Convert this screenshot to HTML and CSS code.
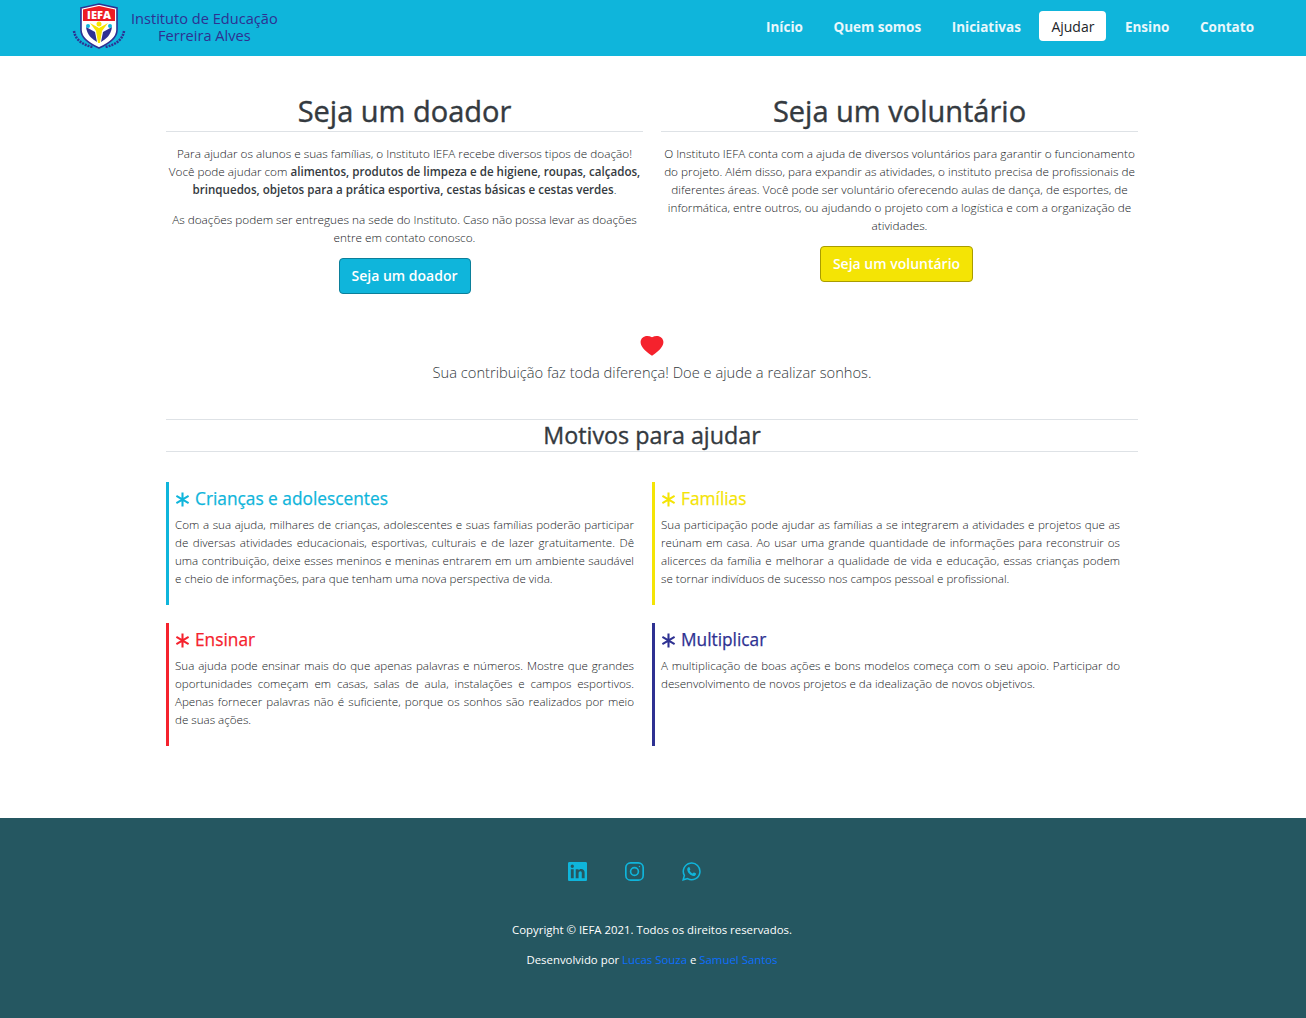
FILE: index.html
```html
<!DOCTYPE html>
<html lang="pt-BR">
<head>
  <meta charset="UTF-8">
  <meta name="viewport" content="width=device-width, initial-scale=1.0">
  <title>Ajudar - IEFA</title>
  <link rel="stylesheet" href="styles.css">
</head>
<body>
  <header class="navbar">
    <a class="brand" href="#">
      <svg class="logo" width="56" height="48" viewBox="0 0 56 48">
        <g fill="none" stroke="#2e3192" stroke-width="2.500" stroke-dasharray="2 1">
          <path d="M3 28c1 8 8 14 19 16"/>
          <path d="M53 28c-1 8-8 14-19 16"/>
        </g>
        <path d="M10 5 28 1l18 4v22c0 8-9 14-18 18-9-4-18-10-18-18z" fill="#fff" stroke="#2e3192" stroke-width="1.600"/>
        <path d="M12 6.500 28 3l16 3.500V18H12z" fill="#ed1c24"/>
        <text class="logo-text" x="28" y="16" text-anchor="middle">IEFA</text>
        <path d="M15 24c1 8 6 12 11 15l-2-10z" fill="#2e3192"/>
        <path d="M41 24c-1 8-6 12-11 15l2-10z" fill="#2e3192"/>
        <circle cx="17" cy="23" r="2" fill="#0fb5db"/>
        <circle cx="39" cy="23" r="2" fill="#0fb5db"/>
        <circle cx="28" cy="21" r="2.500" fill="#f7e400"/>
        <path d="M19 20l9 5 9-5-6 8-2 12h-2l-2-12z" fill="#f7e400"/>
      </svg>
      <span class="brand-name">Instituto de Educação<br>Ferreira Alves</span>
    </a>
    <nav class="menu">
      <a href="#">Início</a>
      <a href="#">Quem somos</a>
      <a href="#">Iniciativas</a>
      <a class="active" href="#">Ajudar</a>
      <a href="#">Ensino</a>
      <a href="#">Contato</a>
    </nav>
  </header>

  <main class="container">
    <section class="cta-row">
      <div class="cta">
        <h1>Seja um doador</h1>
        <p>Para ajudar os alunos e suas famílias, o Instituto IEFA recebe diversos tipos de doação! Você pode ajudar com <b>alimentos, produtos de limpeza e de higiene, roupas, calçados, brinquedos, objetos para a prática esportiva, cestas básicas e cestas verdes</b>.</p>
        <p>As doações podem ser entregues na sede do Instituto. Caso não possa levar as doações entre em contato conosco.</p>
        <a class="btn btn-blue" href="#">Seja um doador</a>
      </div>
      <div class="cta">
        <h1>Seja um voluntário</h1>
        <p>O Instituto IEFA conta com a ajuda de diversos voluntários para garantir o funcionamento do projeto. Além disso, para expandir as atividades, o instituto precisa de profissionais de diferentes áreas. Você pode ser voluntário oferecendo aulas de dança, de esportes, de informática, entre outros, ou ajudando o projeto com a logística e com a organização de atividades.</p>
        <a class="btn btn-yellow" href="#">Seja um voluntário</a>
      </div>
    </section>

    <section class="banner">
      <svg width="24" height="22" viewBox="0 0 16 15"><path d="M8 14.800C-6 6.500 2-1.500 8 2.300c6-3.800 14 4.200 0 12.500z" fill="#f5222d"/></svg>
      <p>Sua contribuição faz toda diferença! Doe e ajude a realizar sonhos.</p>
    </section>

    <h2 class="title">Motivos para ajudar</h2>

    <section class="reasons">
      <article class="reason blue">
        <h3><svg class="star" viewBox="0 0 16 16"><use href="#star"/></svg>Crianças e adolescentes</h3>
        <p>Com a sua ajuda, milhares de crianças, adolescentes e suas famílias poderão participar de diversas atividades educacionais, esportivas, culturais e de lazer gratuitamente. Dê uma contribuição, deixe esses meninos e meninas entrarem em um ambiente saudável e cheio de informações, para que tenham uma nova perspectiva de vida.</p>
      </article>
      <article class="reason yellow">
        <h3><svg class="star" viewBox="0 0 16 16"><use href="#star"/></svg>Famílias</h3>
        <p>Sua participação pode ajudar as famílias a se integrarem a atividades e projetos que as reúnam em casa. Ao usar uma grande quantidade de informações para reconstruir os alicerces da família e melhorar a qualidade de vida e educação, essas crianças podem se tornar indivíduos de sucesso nos campos pessoal e profissional.</p>
      </article>
      <article class="reason red">
        <h3><svg class="star" viewBox="0 0 16 16"><use href="#star"/></svg>Ensinar</h3>
        <p>Sua ajuda pode ensinar mais do que apenas palavras e números. Mostre que grandes oportunidades começam em casas, salas de aula, instalações e campos esportivos. Apenas fornecer palavras não é suficiente, porque os sonhos são realizados por meio de suas ações.</p>
      </article>
      <article class="reason navy">
        <h3><svg class="star" viewBox="0 0 16 16"><use href="#star"/></svg>Multiplicar</h3>
        <p>A multiplicação de boas ações e bons modelos começa com o seu apoio. Participar do desenvolvimento de novos projetos e da idealização de novos objetivos.</p>
      </article>
    </section>
  </main>

  <footer class="footer">
    <div class="social">
      <a href="#"><svg width="19" height="19" viewBox="0 0 16 16"><path fill="currentColor" fill-rule="evenodd" d="M0 1.100C0 .5.500 0 1.200 0h13.600c.7 0 1.200.5 1.200 1.100v13.800c0 .6-.5 1.100-1.200 1.100H1.200C.5 16 0 15.500 0 14.900zM2.400 6v7.600h2.400V6zm1.200-3.800a1.400 1.400 0 1 0 0 2.800 1.400 1.400 0 0 0 0-2.800zM6.500 6v7.600h2.400V9.500c0-1.100.6-1.700 1.500-1.700s1.200.7 1.200 1.700v4.100H14V9c0-2.200-1.200-3.200-2.800-3.200-1.200 0-1.900.6-2.300 1.200V6z"/></svg></a>
      <a href="#"><svg width="19" height="19" viewBox="0 0 16 16" fill="none" stroke="currentColor" stroke-width="1.400"><rect x=".7" y=".7" width="14.600" height="14.600" rx="4"/><circle cx="8" cy="8" r="3.300"/><circle cx="12.200" cy="3.800" r=".6" fill="currentColor" stroke="none"/></svg></a>
      <a href="#"><svg width="19" height="19" viewBox="0 0 16 16"><path fill="none" stroke="currentColor" stroke-width="1.300" d="M1 15l1-3.700A7 7 0 1 1 4.700 14z"/><path fill="currentColor" d="M5.700 4.300c.3 0 .6 0 .7.300l.6 1.400c.1.200 0 .4-.1.600l-.5.600c.6 1.200 1.400 1.900 2.600 2.500l.6-.7c.2-.2.400-.2.600-.1l1.300.6c.3.100.4.300.3.600-.1 1.100-1 1.700-2 1.700-2.600-.2-5.100-2.700-5.400-5.200 0-1.100.4-1.900 1.300-2.300z"/></svg></a>
    </div>
    <p>Copyright © IEFA 2021. Todos os direitos reservados.</p>
    <p>Desenvolvido por <a href="#">Lucas Souza</a> e <a href="#">Samuel Santos</a></p>
  </footer>

  <svg class="defs" width="0" height="0">
    <symbol id="star" viewBox="0 0 16 16">
      <path d="M8 .500v15M1.500 4.200l13 7.600M14.500 4.200l-13 7.600" fill="none" stroke="currentColor" stroke-width="2.200"/>
    </symbol>
  </svg>
</body>
</html>
```

FILE: styles.css
```css
* { box-sizing: border-box; }
body { margin: 0; font-family: "Open Sans", "Noto Sans", sans-serif; font-weight: 300; font-size: 11.75px; line-height: 18px; color: #16191c; background: #fff; }
a { text-decoration: none; }
p { margin: 0; }

.navbar { height: 56px; background: #0fb5db; display: flex; justify-content: space-between; align-items: center; padding: 0 40px 4px 71px; }
.brand { display: flex; align-items: center; color: #2e3192; font-size: 14.6px; line-height: 17.500px; font-weight: 400; text-align: center; gap: 4px; }
.brand-name { margin-top: 2px; }
.logo { margin-top: 2px; }
.logo-text { font: 800 11px "Open Sans", sans-serif; fill: #fff; }
.menu { display: flex; align-items: center; }
.menu a { color: #e9f7fb; font-size: 13.5px; font-weight: 700; line-height: 20px; padding: 6px 12px 4px; margin-left: 6.500px; border-radius: 4px; }
.menu a.active { background: #fff; color: #212529; font-size: 14px; font-weight: 400; }

.container { width: 972px; margin-left: 166px; padding-bottom: 72px; }
.cta-row { display: grid; grid-template-columns: 477px 477px; gap: 18px; padding-top: 36px; }
.cta { text-align: center; }
.cta h1 { margin: 0 0 12px; font-size: 29px; line-height: 38px; padding-bottom: 1px; font-weight: 500; color: #343a40; border-bottom: 1px solid #dee2e6; -webkit-text-stroke: .4px #343a40; }
.cta p { margin-bottom: 12px; }
.cta b { font-size: 11.6px; line-height: 1; font-weight: 600; color: #343a40; }
.btn { display: inline-block; padding: 7px 12px; font-size: 14px; line-height: 20px; font-weight: 600; color: #fff; border-radius: 4px; border: 1px solid; }
.btn-blue { background: #0fb5db; border-color: #0b7f9a; }
.btn-yellow { background: #f4e405; border-color: #a99c00; margin-right: 6px; }

.banner { margin-top: 40px; text-align: center; }
.banner svg { display: block; margin: 0 auto 4px; }
.banner p { font-size: 14.7px; line-height: 24px; color: #343a40; }

.title { margin: 35px 0 30px; text-align: center; font-size: 23.3px; line-height: 31px; font-weight: 500; color: #343a40; border-top: 1px solid #dee2e6; border-bottom: 1px solid #dee2e6; -webkit-text-stroke: .35px #343a40; }

.reasons { display: grid; grid-template-columns: 486px 486px; row-gap: 18px; }
.reason { height: 123px; border-left: 3px solid; padding: 4px 18px 0 6px; }
.reason h3 { margin: 0 0 4px; font-size: 17.3px; line-height: 26px; font-weight: 500; display: flex; align-items: center; gap: 5px; -webkit-text-stroke: .25px currentColor; }
.reason p { font-size: 11.6px; text-align: justify; color: #16191c; -webkit-text-stroke: 0; }
.star { width: 15px; height: 15px; margin-top: 1px; }
.blue { border-color: #0fb5db; color: #0fb5db; }
.yellow { border-color: #f4e405; color: #f4e405; }
.red { border-color: #f5222d; color: #f5222d; }
.navy { border-color: #2e3192; color: #2e3192; }

.footer { height: 200px; background: #255761; color: #fff; text-align: center; padding: 44px 2px 0 0; font-size: 11.4px; font-weight: 400; }
.social { display: flex; justify-content: center; gap: 38px; margin: 0 36px 39px 0; height: 20px; }
.social a { color: #0fb5db; display: block; height: 19px; }
.footer p { margin-bottom: 12px; }
.footer p a { color: #0d6efd; }
.defs { position: absolute; }
```
